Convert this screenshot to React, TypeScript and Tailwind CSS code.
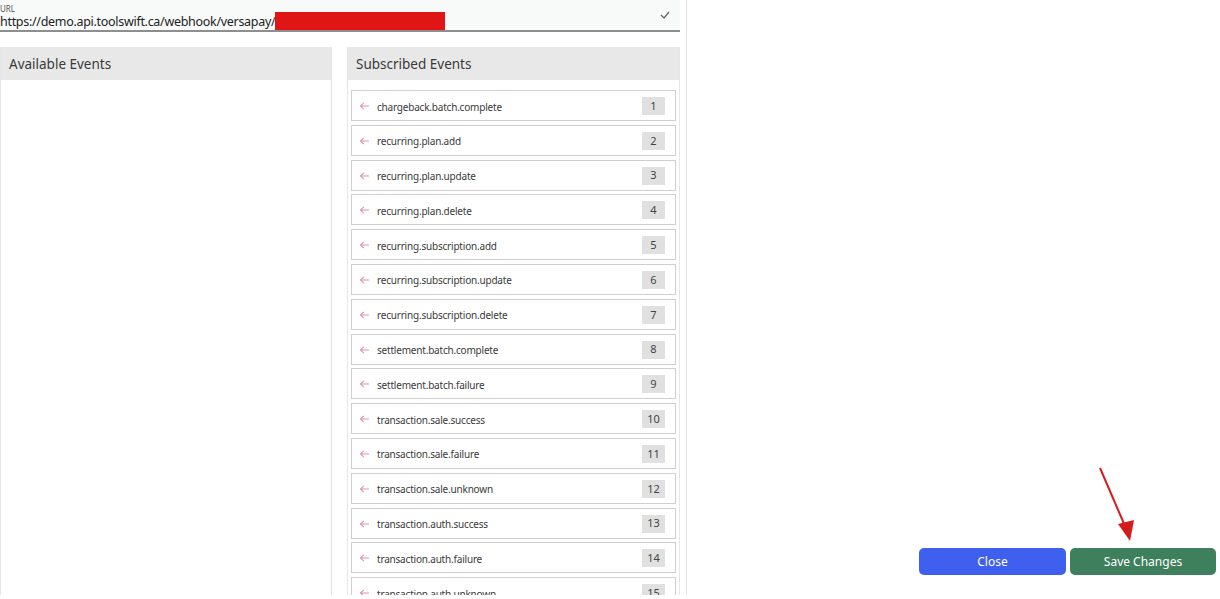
import React from "react";

const events = [
  "chargeback.batch.complete",
  "recurring.plan.add",
  "recurring.plan.update",
  "recurring.plan.delete",
  "recurring.subscription.add",
  "recurring.subscription.update",
  "recurring.subscription.delete",
  "settlement.batch.complete",
  "settlement.batch.failure",
  "transaction.sale.success",
  "transaction.sale.failure",
  "transaction.sale.unknown",
  "transaction.auth.success",
  "transaction.auth.failure",
  "transaction.auth.unknown",
];

function EventItem({ name, order }: { name: string; order: number }) {
  return (
    <div className="h-[31px] shrink-0 border border-[#cfcfcf] bg-white flex items-center pl-[7px] pr-[10px]">
      <svg width="11" height="10" viewBox="0 0 11 10" className="mr-[7px] mt-[1px]">
        <path d="M10 5H1.5M4.8 1.8 1.5 5l3.3 3.2" fill="none" stroke="#e094a6" strokeWidth="1.1" />
      </svg>
      <span className="text-[10px] tracking-[-0.2px] text-[#3a3a3a] flex-1 mt-[3px]">{name}</span>
      <span className="w-[23px] h-[18px] bg-[#e0e0e0] text-[11px] text-[#444] flex items-center justify-center mt-[1px]">
        {order}
      </span>
    </div>
  );
}

function Panel({ title, children }: { title: string; children?: React.ReactNode }) {
  return (
    <div className="flex flex-col border-x border-[#e6e6e6] h-full">
      <div className="h-[33px] shrink-0 bg-[#e8e8e8] flex items-center px-[8px] text-[13.5px] text-[#393939] pt-[1px]">
        {title}
      </div>
      <div className="flex-1 overflow-hidden pt-[10px] px-[3px] flex flex-col gap-[3.8px]">{children}</div>
    </div>
  );
}

export default function App() {
  return (
    <div
      className="w-[1220px] h-[599px] bg-white flex overflow-hidden"
      style={{ fontFamily: '"Noto Sans", "Liberation Sans", sans-serif' }}
    >
      <div className="w-[687px] h-[595px] border-r border-[#e4e4e4] flex flex-col overflow-hidden">
        <div className="h-[32px] w-[680px] shrink-0 bg-[#f8fafa] border-b-2 border-[#8e8e8e] flex items-center pr-[10px]">
          <div className="flex-1 flex flex-col leading-none pt-[5px]">
            <span className="text-[8px] text-[#555] -mb-[1px]">URL</span>
            <div className="flex items-center">
              <span className="text-[12.5px] tracking-[-0.3px] text-[#222] leading-[17px]">
                https://demo.api.toolswift.ca/webhook/versapay/
              </span>
              <span className="w-[170px] h-[18px] bg-[#e01616]" />
            </div>
          </div>
          <svg width="10" height="8" viewBox="0 0 10 8">
            <path d="M1 4l3 3 5-6" fill="none" stroke="#666" strokeWidth="1.3" />
          </svg>
        </div>
        <div className="flex-1 mt-[15px] w-[680px] grid grid-cols-[332px_333px] gap-x-[15px] overflow-hidden">
          <Panel title="Available Events" />
          <Panel title="Subscribed Events">
            {events.map((e, i) => (
              <EventItem key={e} name={e} order={i + 1} />
            ))}
          </Panel>
        </div>
      </div>
      <div className="flex-1 relative">
        <svg className="absolute left-[405px] top-[462px]" width="50" height="85" viewBox="0 0 50 85">
          <line x1="8" y1="6" x2="33" y2="64" stroke="#d41c1c" strokeWidth="2" />
          <path d="M26 62 L42 58 L38 79 Z" fill="#d41c1c" />
        </svg>
        <div className="absolute left-[232px] top-[548px] flex gap-[4px]">
          <button className="w-[147px] h-[27px] rounded-[5px] bg-[#3f5fee] text-white text-[12px] pt-[1px]">Close</button>
          <button className="w-[146px] h-[27px] rounded-[5px] bg-[#3e7f5d] text-white text-[12px] pt-[1px]">Save Changes</button>
        </div>
      </div>
    </div>
  );
}
